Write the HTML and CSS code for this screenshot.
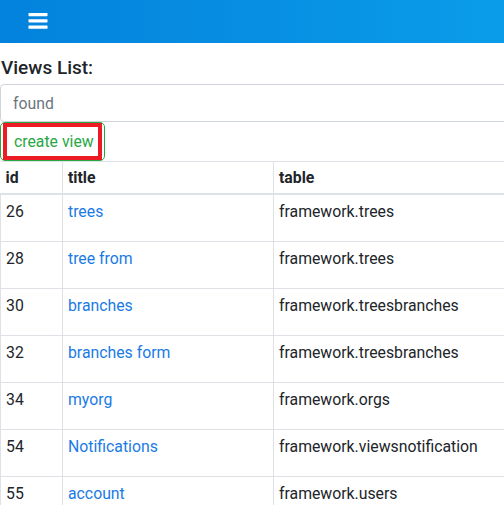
FILE: index.html
```html
<!DOCTYPE html>
<html>
<head>
<meta charset="utf-8">
<link rel="stylesheet" href="styles.css">
</head>
<body>
<header class="topbar">
  <button class="menu-btn" aria-label="menu">
    <svg width="20" height="18" viewBox="0 0 20 18"><rect x="0.5" y="1" width="19" height="3.2" rx="0.6" fill="#fff"/><rect x="0.5" y="7.2" width="19" height="3.2" rx="0.6" fill="#fff"/><rect x="0.5" y="13.6" width="19" height="3.2" rx="0.6" fill="#fff"/></svg>
  </button>
</header>
<main class="content">
  <h2 class="title">Views List:</h2>
  <input class="search" type="text" placeholder="found">
  <div class="actions">
    <button class="btn-create"><span class="btn-label">create view</span></button>
  </div>
  <table class="views">
    <colgroup><col class="c-id"><col class="c-title"><col class="c-table"></colgroup>
    <thead>
      <tr><th>id</th><th>title</th><th>table</th></tr>
    </thead>
    <tbody>
      <tr><td>26</td><td><a href="#">trees</a></td><td>framework.trees</td></tr>
      <tr><td>28</td><td><a href="#">tree from</a></td><td>framework.trees</td></tr>
      <tr><td>30</td><td><a href="#">branches</a></td><td>framework.treesbranches</td></tr>
      <tr><td>32</td><td><a href="#">branches form</a></td><td>framework.treesbranches</td></tr>
      <tr><td>34</td><td><a href="#">myorg</a></td><td>framework.orgs</td></tr>
      <tr><td>54</td><td><a href="#">Notifications</a></td><td>framework.viewsnotification</td></tr>
      <tr><td>55</td><td><a href="#">account</a></td><td>framework.users</td></tr>
    </tbody>
  </table>
</main>
</body>
</html>
```
FILE: styles.css
```css
html, body {
  margin: 0;
  padding: 0;
  overflow: hidden;
  background: #fff;
}
body {
  font-family: Roboto, "Noto Sans", sans-serif;
  font-size: 15.8px;
  line-height: 24px;
  color: #212529;
}
.topbar {
  height: 43px;
  background: linear-gradient(to right, #0382dc, #0a9ce9);
  display: flex;
  align-items: center;
  padding-left: 28px;
}
.menu-btn {
  background: none;
  border: 0;
  padding: 0;
  margin-top: -2px;
  display: flex;
}
.content {
  width: 560px;
}
.title {
  margin: 10px 0 0 0;
  padding-left: 1px;
  font-size: 19px;
  font-weight: 500;
  line-height: 29px;
  height: 31px;
}
.search {
  display: block;
  box-sizing: border-box;
  width: 100%;
  height: 38px;
  margin: 0;
  border: 1px solid #ced4da;
  border-radius: 4px 0 0 4px;
  padding: 6px 12px;
  font: inherit;
  color: #495057;
}
.search::placeholder {
  color: #6c757d;
}
.actions {
  display: flex;
}
.btn-create {
  box-sizing: border-box;
  height: 39px;
  width: 105px;
  border: 1px solid #28a745;
  border-radius: 5px;
  background: #fff;
  padding: 0 0 0 2px;
  font: inherit;
  color: #28a745;
  display: flex;
  align-items: stretch;
}
.btn-label {
  box-sizing: border-box;
  border: 4px solid #ed1c24;
  width: 99px;
  display: flex;
  align-items: center;
  padding-left: 7px;
}
.views {
  width: 100%;
  border-collapse: collapse;
  table-layout: fixed;
}
.c-id { width: 62px; }
.c-title { width: 211px; }
.views th, .views td {
  text-align: left;
  vertical-align: top;
  border: 1px solid #dee2e6;
  border-right: 0;
}
.views th {
  font-weight: 700;
  padding: 4px 5px 3px;
  border-bottom: 2px solid #dee2e6;
}
.views th:first-child {
  border-left: 0;
}
.views td {
  padding: 5px 5px 17px;
}
.views a {
  color: #1a7ae6;
  text-decoration: none;
}
```
